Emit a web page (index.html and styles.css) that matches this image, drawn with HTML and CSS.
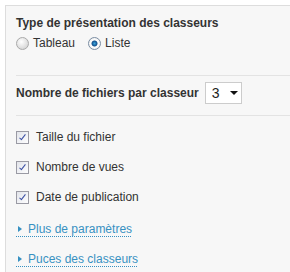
FILE: index.html
```html
<!DOCTYPE html>
<html lang="fr">
<head>
    <meta charset="UTF-8">
    <title>Options des classeurs</title>
    <link rel="stylesheet" href="styles.css">
</head>
<body>
    <div class="panel">
        <div class="section section-type">
            <div class="label">Type de présentation des classeurs</div>
            <div class="radios">
                <label class="option"><span class="radio"></span>Tableau</label>
                <label class="option"><span class="radio checked"></span>Liste</label>
            </div>
        </div>

        <div class="section section-count">
            <span class="label">Nombre de fichiers par classeur</span>
            <div class="select">
                <span>3</span>
                <span class="caret"></span>
            </div>
        </div>

        <div class="checks">
            <label class="check"><span class="box checked"></span>Taille du fichier</label>
            <label class="check"><span class="box checked"></span>Nombre de vues</label>
            <label class="check"><span class="box checked"></span>Date de publication</label>
        </div>

        <div class="links">
            <a class="more" href="#">Plus de paramètres</a>
            <a class="more" href="#">Puces des classeurs</a>
        </div>
    </div>
</body>
</html>
```

FILE: styles.css
```css
* {
    margin: 0;
    padding: 0;
    box-sizing: border-box;
}

html,
body {
    height: 100%;
}

body {
    background: #ffffff;
    font-family: "Liberation Sans", Arial, sans-serif;
    font-size: 12px;
    color: #333333;
    overflow: hidden;
}

.panel {
    margin: 5px 0 0 5px;
    border-top: 1px solid #dddddd;
    border-left: 1px solid #dddddd;
    background: #f7f7f7;
    padding-left: 10px;
    height: calc(100% - 5px);
}

.label {
    font-weight: bold;
    font-size: 12px;
    line-height: 16px;
    color: #333333;
}

.section {
    border-bottom: 1px solid #e3e3e3;
}

.section-type {
    padding: 9px 0 24px;
}

.radios {
    display: flex;
    gap: 13px;
    margin-top: 4px;
    height: 16px;
    align-items: center;
}

.option,
.check {
    display: flex;
    align-items: center;
    line-height: 16px;
}

/* custom radio */
.radio {
    flex: none;
    width: 13px;
    height: 13px;
    border-radius: 50%;
    border: 1px solid #a9a9a9;
    background: radial-gradient(circle at 40% 35%, #ffffff 0%, #e2e2e2 55%, #c9c9c9 100%);
    margin-right: 4px;
}

.radio.checked {
    background: radial-gradient(circle, #3aa6dc 0, #134f8c 2.6px, #ffffff 3.4px, #e4e4e4 100%);
    border-color: #7b8ea3;
}

.section-count {
    display: flex;
    align-items: center;
    gap: 6px;
    padding: 6px 0 11px;
}

.select {
    display: flex;
    align-items: center;
    width: 37px;
    height: 22px;
    background: #ffffff;
    border: 1px solid #cccccc;
    padding-left: 6px;
    font-size: 14px;
    color: #222222;
}

.caret {
    margin-left: 10px;
    width: 0;
    height: 0;
    border-left: 4px solid transparent;
    border-right: 4px solid transparent;
    border-top: 4px solid #111111;
}

.checks {
    padding-top: 6px;
}

.check {
    height: 30px;
}

/* custom checkbox */
.box {
    flex: none;
    width: 13px;
    height: 13px;
    border: 1px solid #9a9aa4;
    background: linear-gradient(135deg, #e2e4ea, #fdfdfe);
    margin-right: 7px;
    position: relative;
}

.box.checked::after {
    content: "";
    position: absolute;
    left: 4px;
    top: 1px;
    width: 2px;
    height: 6px;
    border-right: 1.5px solid #3a4fa4;
    border-bottom: 1.5px solid #3a4fa4;
    transform: rotate(38deg);
}

.links {
    margin-top: 2px;
}

.more {
    display: flex;
    align-items: center;
    height: 30px;
    width: max-content;
    color: #3791c2;
    text-decoration: none;
    padding-left: 12px;
    position: relative;
    background-image: linear-gradient(90deg, #3791c2 50%, transparent 50%);
    background-size: 2px 1px;
    background-repeat: repeat-x;
    background-position: 12px 22px;
}

.more::before {
    content: "";
    position: absolute;
    left: 2px;
    top: 12px;
    border-top: 3px solid transparent;
    border-bottom: 3px solid transparent;
    border-left: 4px solid #3791c2;
}
```
